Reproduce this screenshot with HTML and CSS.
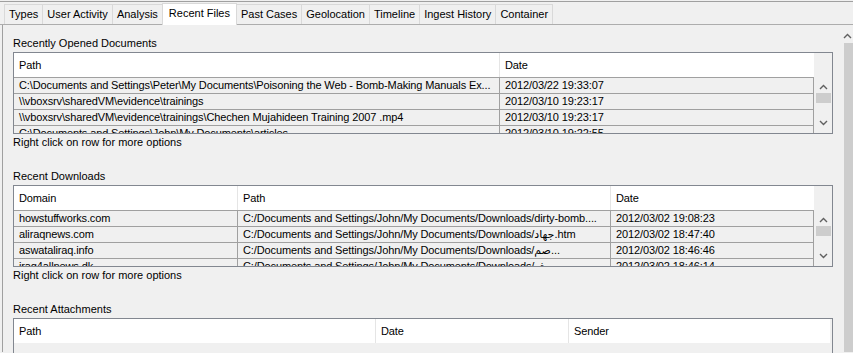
FILE: index.html
```html
<!DOCTYPE html>
<html>
<head>
  <meta charset="UTF-8">
  <title>Recent Files</title>
  <link rel="stylesheet" href="styles.css">
</head>
<body>
  <div class="topline"></div>
  <div class="tabbar">
    <div class="tab">Types</div>
    <div class="tab">User Activity</div>
    <div class="tab">Analysis</div>
    <div class="tab active">Recent Files</div>
    <div class="tab">Past Cases</div>
    <div class="tab">Geolocation</div>
    <div class="tab">Timeline</div>
    <div class="tab">Ingest History</div>
    <div class="tab">Container</div>
  </div>

  <div class="frame">
    <div class="panel">

      <div class="group">
        <div class="label">Recently Opened Documents</div>
        <div class="list docs">
          <div class="grid">
            <div class="row head">
              <div class="cell">Path</div>
              <div class="cell">Date</div>
            </div>
            <div class="row">
              <div class="cell">C:\Documents and Settings\Peter\My Documents\Poisoning the Web - Bomb-Making Manuals Ex...</div>
              <div class="cell">2012/03/22 19:33:07</div>
            </div>
            <div class="row">
              <div class="cell">\\vboxsrv\sharedVM\evidence\trainings</div>
              <div class="cell">2012/03/10 19:23:17</div>
            </div>
            <div class="row">
              <div class="cell">\\vboxsrv\sharedVM\evidence\trainings\Chechen Mujahideen Training 2007 .mp4</div>
              <div class="cell">2012/03/10 19:23:17</div>
            </div>
            <div class="row">
              <div class="cell">C:\Documents and Settings\John\My Documents\articles</div>
              <div class="cell">2012/03/10 19:22:55</div>
            </div>
          </div>
          <div class="vscroll">
            <svg class="arrow" width="9" height="6" viewBox="0 0 9 6"><polyline points="1,5 4.5,1.5 8,5" fill="none" stroke="#606060" stroke-width="1.4"/></svg>
            <div class="thumb"></div>
            <div class="spacer"></div>
            <svg class="arrow" width="9" height="6" viewBox="0 0 9 6"><polyline points="1,1 4.5,4.5 8,1" fill="none" stroke="#606060" stroke-width="1.4"/></svg>
          </div>
        </div>
        <div class="hint">Right click on row for more options</div>
      </div>

      <div class="group">
        <div class="label">Recent Downloads</div>
        <div class="list downloads">
          <div class="grid">
            <div class="row head">
              <div class="cell">Domain</div>
              <div class="cell">Path</div>
              <div class="cell">Date</div>
            </div>
            <div class="row">
              <div class="cell">howstuffworks.com</div>
              <div class="cell">C:/Documents and Settings/John/My Documents/Downloads/dirty-bomb....</div>
              <div class="cell">2012/03/02 19:08:23</div>
            </div>
            <div class="row">
              <div class="cell">aliraqnews.com</div>
              <div class="cell">C:/Documents and Settings/John/My Documents/Downloads/جهاد.htm</div>
              <div class="cell">2012/03/02 18:47:40</div>
            </div>
            <div class="row">
              <div class="cell">aswataliraq.info</div>
              <div class="cell">C:/Documents and Settings/John/My Documents/Downloads/صم...</div>
              <div class="cell">2012/03/02 18:46:46</div>
            </div>
            <div class="row">
              <div class="cell">iraq4allnews.dk</div>
              <div class="cell">C:/Documents and Settings/John/My Documents/Downloads/جيش...</div>
              <div class="cell">2012/03/02 18:46:14</div>
            </div>
          </div>
          <div class="vscroll">
            <svg class="arrow" width="9" height="6" viewBox="0 0 9 6"><polyline points="1,5 4.5,1.5 8,5" fill="none" stroke="#606060" stroke-width="1.4"/></svg>
            <div class="thumb"></div>
            <div class="spacer"></div>
            <svg class="arrow" width="9" height="6" viewBox="0 0 9 6"><polyline points="1,1 4.5,4.5 8,1" fill="none" stroke="#606060" stroke-width="1.4"/></svg>
          </div>
        </div>
        <div class="hint">Right click on row for more options</div>
      </div>

      <div class="group">
        <div class="label">Recent Attachments</div>
        <div class="list attachments">
          <div class="grid">
            <div class="row head">
              <div class="cell">Path</div>
              <div class="cell">Date</div>
              <div class="cell">Sender</div>
            </div>
          </div>
        </div>
      </div>

    </div>
    <div class="pagebar">
      <svg class="arrow" width="9" height="6" viewBox="0 0 9 6"><polyline points="1,5 4.5,1.5 8,5" fill="none" stroke="#606060" stroke-width="1.4"/></svg>
      <div class="pagethumb"></div>
    </div>
  </div>
</body>
</html>
```

FILE: styles.css
```css
* {
  box-sizing: border-box;
}
html, body {
  height: 100%;
}
body {
  margin: 0;
  background-color: #f0f0f0;
  font-family: "Liberation Sans", "DejaVu Sans", sans-serif;
  font-size: 11px;
  color: #000;
  overflow: hidden;
}
.topline {
  margin-top: 1px;
  height: 1px;
  background-color: #a0a0a0;
}
.tabbar {
  display: flex;
  align-items: flex-end;
  height: 23px;
  padding-left: 4px;
  border-bottom: 1px solid #adadad;
}
.tab {
  height: 20px;
  line-height: 19px;
  padding: 0 4px;
  border: 1px solid #d9d9d9;
  border-bottom: none;
  margin-right: -1px;
  background-color: #f0f0f0;
  white-space: nowrap;
}
.tab.active {
  position: relative;
  z-index: 1;
  height: 22px;
  line-height: 18px;
  margin-bottom: -1px;
  padding: 0 6px;
  background-color: #fff;
}
.frame {
  display: flex;
  height: calc(100% - 26px);
}
.panel {
  flex: 1;
  margin-left: 2px;
  border-left: 1px solid #a0a0a0;
  padding: 10px 0 0 10px;
}
.group {
  margin-bottom: 18px;
}
.label, .hint {
  height: 16px;
  line-height: 16px;
  white-space: nowrap;
}
.label {
  margin-bottom: 1px;
}
.list {
  display: flex;
  width: 820px;
  height: 82px;
  border: 1px solid #828790;
  overflow: hidden;
}
.grid {
  width: 800px;
}
.row {
  display: grid;
  height: 16px;
  border-top: 1px solid #a0a0a0;
}
.row.head {
  height: 24px;
  border-top: none;
  background-color: #fff;
}
.docs .row {
  grid-template-columns: 485px 315px;
}
.downloads .row {
  grid-template-columns: 223px 373px 204px;
}
.attachments .grid {
  width: 816px;
}
.attachments .row {
  grid-template-columns: 361px 193px 262px;
}
.cell {
  padding-left: 5px;
  line-height: 15px;
  letter-spacing: -0.12px;
  white-space: nowrap;
  overflow: hidden;
}
.cell + .cell {
  border-left: 1px solid #a0a0a0;
}
.row .cell:last-child {
  border-right: 1px solid #a0a0a0;
}
.row.head .cell {
  line-height: 24px;
  border-right: none;
}
.row.head .cell + .cell {
  border-left: 1px solid #e5e5e5;
}
.vscroll {
  flex: 1;
  display: flex;
  flex-direction: column;
  align-items: center;
  padding-top: 31px;
}
.vscroll .thumb {
  width: 15px;
  height: 10px;
  margin-top: 3px;
  background-color: #cdcdcd;
}
.vscroll .spacer {
  height: 17px;
}
.arrow {
  display: block;
}
.pagebar {
  width: 10px;
  padding-top: 8px;
  display: flex;
  flex-direction: column;
  align-items: flex-end;
}
.pagebar .arrow {
  margin-right: 1px;
}
.pagethumb {
  flex: 1;
  width: 9px;
  margin-top: 4px;
  background-color: #cdcdcd;
}
```
